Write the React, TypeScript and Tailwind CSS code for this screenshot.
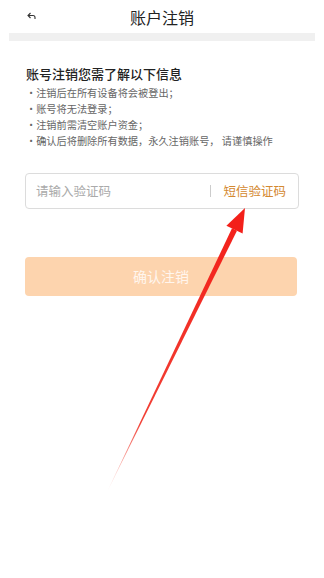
const cjk = { fontFamily: '"Noto Sans CJK SC", "Noto Sans", sans-serif' };

const notes = [
  "·注销后在所有设备将会被登出；",
  "·账号将无法登录；",
  "·注销前需清空账户资金；",
  "·确认后将删除所有数据，永久注销账号， 请谨慎操作",
];

function BackIcon() {
  return (
    <svg width="9" height="8" viewBox="0 0 9 8" fill="none" stroke="#333" strokeWidth="1.1">
      <path d="M3.5 1 L1 3.5 L3.5 6" />
      <path d="M1 3.5 H6 Q8 3.5 8 5.5 V7" />
    </svg>
  );
}

export default function App() {
  return (
    <div className="relative h-[578px] w-[324px] overflow-hidden bg-white" style={cjk}>
      <header className="relative flex h-[33px] items-center justify-center">
        <div className="absolute left-[27px] top-[12px]">
          <BackIcon />
        </div>
        <h1 className="text-[16px] leading-none text-[#222]">账户注销</h1>
      </header>
      <div className="mx-[9px] h-[8px] bg-[#f0f0f0]" />

      <section className="px-[26px] pt-[24px]">
        <h2 className="text-[13px] font-medium leading-[18px] text-[#222]">账号注销您需了解以下信息</h2>
        <ul className="mt-[2px]">
          {notes.map((n) => (
            <li key={n} className="text-[10.2px] leading-[16px] text-[#666]">
              {n}
            </li>
          ))}
        </ul>
      </section>

      <div className="mx-[25px] mt-[24px] flex h-[36px] items-center rounded-[4px] border border-[#dcdcdc] pl-[10px] pr-[12px]">
        <span className="flex-1 text-[12.5px] text-[#aaa]">请输入验证码</span>
        <span className="h-[12px] w-px bg-[#ccc]" />
        <span className="ml-[12px] text-[12.5px] text-[#d4892f]">短信验证码</span>
      </div>

      <button className="mx-[25px] mt-[48px] flex h-[39px] w-[272px] items-center justify-center rounded-[4px] bg-[#fdd4ae] text-[14px] text-[#fff6ee]">
        确认注销
      </button>

      <svg className="pointer-events-none absolute left-0 top-0" width="324" height="578" viewBox="0 0 324 578">
        <defs>
          <linearGradient id="fade" x1="108" y1="490" x2="240" y2="215" gradientUnits="userSpaceOnUse">
            <stop offset="0" stopColor="#f04a3c" stopOpacity="0.2" />
            <stop offset="0.25" stopColor="#f02a1e" stopOpacity="0.9" />
            <stop offset="1" stopColor="#f3201a" />
          </linearGradient>
        </defs>
        <polygon points="108,490 232,228.3 237,230.8" fill="url(#fade)" />
        <polygon points="245,208 242.6,233.5 226.4,225.7" fill="#f3201a" />
      </svg>
    </div>
  );
}
